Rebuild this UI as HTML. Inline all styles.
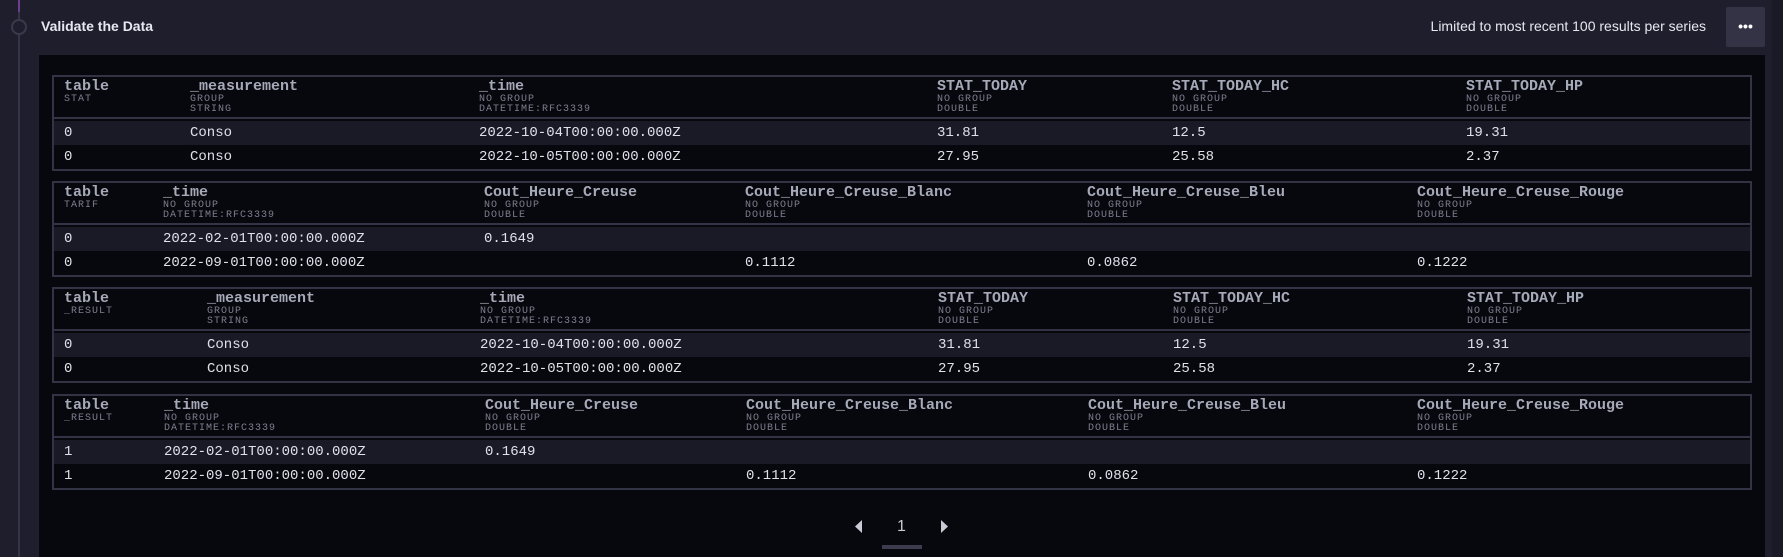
<!DOCTYPE html>
<html><head><meta charset="utf-8"><style>
*{margin:0;padding:0;box-sizing:border-box}
body{width:1783px;height:557px;background:#1e1e2d;position:relative;overflow:hidden;font-family:"Liberation Sans",sans-serif}
.strip{position:absolute;left:1772px;top:0;width:11px;height:557px;background:#1a1a26}
.vline{position:absolute;left:18px;top:0;width:2px;height:557px;background:#343446}
.vtop{position:absolute;left:18px;top:0;width:2px;height:12px;background:#6b3f8f}
.circ{position:absolute;left:11px;top:19px;width:16px;height:16px;border:2px solid #3a3a4c;border-radius:50%;background:#1e1e2d}
.title{position:absolute;left:41px;top:18px;font-size:14px;font-weight:bold;color:#e6e8f0}
.lim{position:absolute;left:1417px;top:18px;font-size:14px;color:#e6e8f0;width:289px;text-align:right;white-space:nowrap}
.btn{position:absolute;left:1726px;top:7px;width:39px;height:40px;background:#333345;border-radius:2px;color:#fff;text-align:center;font-size:14px;line-height:38px;font-weight:bold}
.panel{position:absolute;left:39px;top:55px;width:1726px;height:502px;background:#07080d}
.t{position:absolute;left:52px;width:1700px;height:96px;border:2px solid #333346;font-family:"Liberation Mono",monospace}
.hd{position:absolute;left:0;top:0;width:100%;height:42px;border-bottom:2px solid #333346}
.r{position:absolute;left:0;width:100%;height:24px}
.r1{top:44px;background:#1a1a26}
.r2{top:68px}
.c{position:absolute;top:0;white-space:nowrap}
.hd .n{font-size:15px;font-weight:bold;color:#a6a9b8;line-height:16px;margin-top:2px}
.hd .s{font-size:10px;color:#7c7f8f;letter-spacing:1px;line-height:10px;font-family:"Liberation Mono",monospace}
.r .c{font-size:14px;line-height:24px;color:#dfe1ea}
.pg{position:absolute;top:518px;font-size:16px;color:#c8cad6;font-family:"Liberation Sans",sans-serif}
.ul{position:absolute;left:882px;top:545px;width:40px;height:4px;background:#3c3c4e}
</style></head><body>
<div class="strip"></div>
<div class="vline"></div><div class="vtop"></div><div class="circ"></div>
<div class="title">Validate the Data</div>
<div class="lim">Limited to most recent 100 results per series</div>
<div class="btn">•••</div>
<div class="panel"></div>

<div class="t" style="top:75px">
<div class="hd">
<div class="c" style="left:10px"><div class="n">table</div><div class="s">STAT</div></div>
<div class="c" style="left:136px"><div class="n">_measurement</div><div class="s">GROUP<br>STRING</div></div>
<div class="c" style="left:425px"><div class="n">_time</div><div class="s">NO GROUP<br>DATETIME:RFC3339</div></div>
<div class="c" style="left:883px"><div class="n">STAT_TODAY</div><div class="s">NO GROUP<br>DOUBLE</div></div>
<div class="c" style="left:1118px"><div class="n">STAT_TODAY_HC</div><div class="s">NO GROUP<br>DOUBLE</div></div>
<div class="c" style="left:1412px"><div class="n">STAT_TODAY_HP</div><div class="s">NO GROUP<br>DOUBLE</div></div>
</div>
<div class="r r1"><div class="c" style="left:10px">0</div><div class="c" style="left:136px">Conso</div><div class="c" style="left:425px">2022-10-04T00:00:00.000Z</div><div class="c" style="left:883px">31.81</div><div class="c" style="left:1118px">12.5</div><div class="c" style="left:1412px">19.31</div></div>
<div class="r r2"><div class="c" style="left:10px">0</div><div class="c" style="left:136px">Conso</div><div class="c" style="left:425px">2022-10-05T00:00:00.000Z</div><div class="c" style="left:883px">27.95</div><div class="c" style="left:1118px">25.58</div><div class="c" style="left:1412px">2.37</div></div>
</div>

<div class="t" style="top:181px">
<div class="hd">
<div class="c" style="left:10px"><div class="n">table</div><div class="s">TARIF</div></div>
<div class="c" style="left:109px"><div class="n">_time</div><div class="s">NO GROUP<br>DATETIME:RFC3339</div></div>
<div class="c" style="left:430px"><div class="n">Cout_Heure_Creuse</div><div class="s">NO GROUP<br>DOUBLE</div></div>
<div class="c" style="left:691px"><div class="n">Cout_Heure_Creuse_Blanc</div><div class="s">NO GROUP<br>DOUBLE</div></div>
<div class="c" style="left:1033px"><div class="n">Cout_Heure_Creuse_Bleu</div><div class="s">NO GROUP<br>DOUBLE</div></div>
<div class="c" style="left:1363px"><div class="n">Cout_Heure_Creuse_Rouge</div><div class="s">NO GROUP<br>DOUBLE</div></div>
</div>
<div class="r r1"><div class="c" style="left:10px">0</div><div class="c" style="left:109px">2022-02-01T00:00:00.000Z</div><div class="c" style="left:430px">0.1649</div></div>
<div class="r r2"><div class="c" style="left:10px">0</div><div class="c" style="left:109px">2022-09-01T00:00:00.000Z</div><div class="c" style="left:691px">0.1112</div><div class="c" style="left:1033px">0.0862</div><div class="c" style="left:1363px">0.1222</div></div>
</div>

<div class="t" style="top:287px">
<div class="hd">
<div class="c" style="left:10px"><div class="n">table</div><div class="s">_RESULT</div></div>
<div class="c" style="left:153px"><div class="n">_measurement</div><div class="s">GROUP<br>STRING</div></div>
<div class="c" style="left:426px"><div class="n">_time</div><div class="s">NO GROUP<br>DATETIME:RFC3339</div></div>
<div class="c" style="left:884px"><div class="n">STAT_TODAY</div><div class="s">NO GROUP<br>DOUBLE</div></div>
<div class="c" style="left:1119px"><div class="n">STAT_TODAY_HC</div><div class="s">NO GROUP<br>DOUBLE</div></div>
<div class="c" style="left:1413px"><div class="n">STAT_TODAY_HP</div><div class="s">NO GROUP<br>DOUBLE</div></div>
</div>
<div class="r r1"><div class="c" style="left:10px">0</div><div class="c" style="left:153px">Conso</div><div class="c" style="left:426px">2022-10-04T00:00:00.000Z</div><div class="c" style="left:884px">31.81</div><div class="c" style="left:1119px">12.5</div><div class="c" style="left:1413px">19.31</div></div>
<div class="r r2"><div class="c" style="left:10px">0</div><div class="c" style="left:153px">Conso</div><div class="c" style="left:426px">2022-10-05T00:00:00.000Z</div><div class="c" style="left:884px">27.95</div><div class="c" style="left:1119px">25.58</div><div class="c" style="left:1413px">2.37</div></div>
</div>

<div class="t" style="top:394px">
<div class="hd">
<div class="c" style="left:10px"><div class="n">table</div><div class="s">_RESULT</div></div>
<div class="c" style="left:110px"><div class="n">_time</div><div class="s">NO GROUP<br>DATETIME:RFC3339</div></div>
<div class="c" style="left:431px"><div class="n">Cout_Heure_Creuse</div><div class="s">NO GROUP<br>DOUBLE</div></div>
<div class="c" style="left:692px"><div class="n">Cout_Heure_Creuse_Blanc</div><div class="s">NO GROUP<br>DOUBLE</div></div>
<div class="c" style="left:1034px"><div class="n">Cout_Heure_Creuse_Bleu</div><div class="s">NO GROUP<br>DOUBLE</div></div>
<div class="c" style="left:1363px"><div class="n">Cout_Heure_Creuse_Rouge</div><div class="s">NO GROUP<br>DOUBLE</div></div>
</div>
<div class="r r1"><div class="c" style="left:10px">1</div><div class="c" style="left:110px">2022-02-01T00:00:00.000Z</div><div class="c" style="left:431px">0.1649</div></div>
<div class="r r2"><div class="c" style="left:10px">1</div><div class="c" style="left:110px">2022-09-01T00:00:00.000Z</div><div class="c" style="left:692px">0.1112</div><div class="c" style="left:1034px">0.0862</div><div class="c" style="left:1363px">0.1222</div></div>
</div>

<svg style="position:absolute;left:854px;top:520px" width="10" height="14"><polygon points="8,0 8,13 1,6.5" fill="#c8cad6"/></svg>
<div class="pg" style="left:897px">1</div>
<svg style="position:absolute;left:940px;top:520px" width="10" height="14"><polygon points="1,0 1,13 8,6.5" fill="#c8cad6"/></svg>
<div class="ul"></div>
</body></html>
